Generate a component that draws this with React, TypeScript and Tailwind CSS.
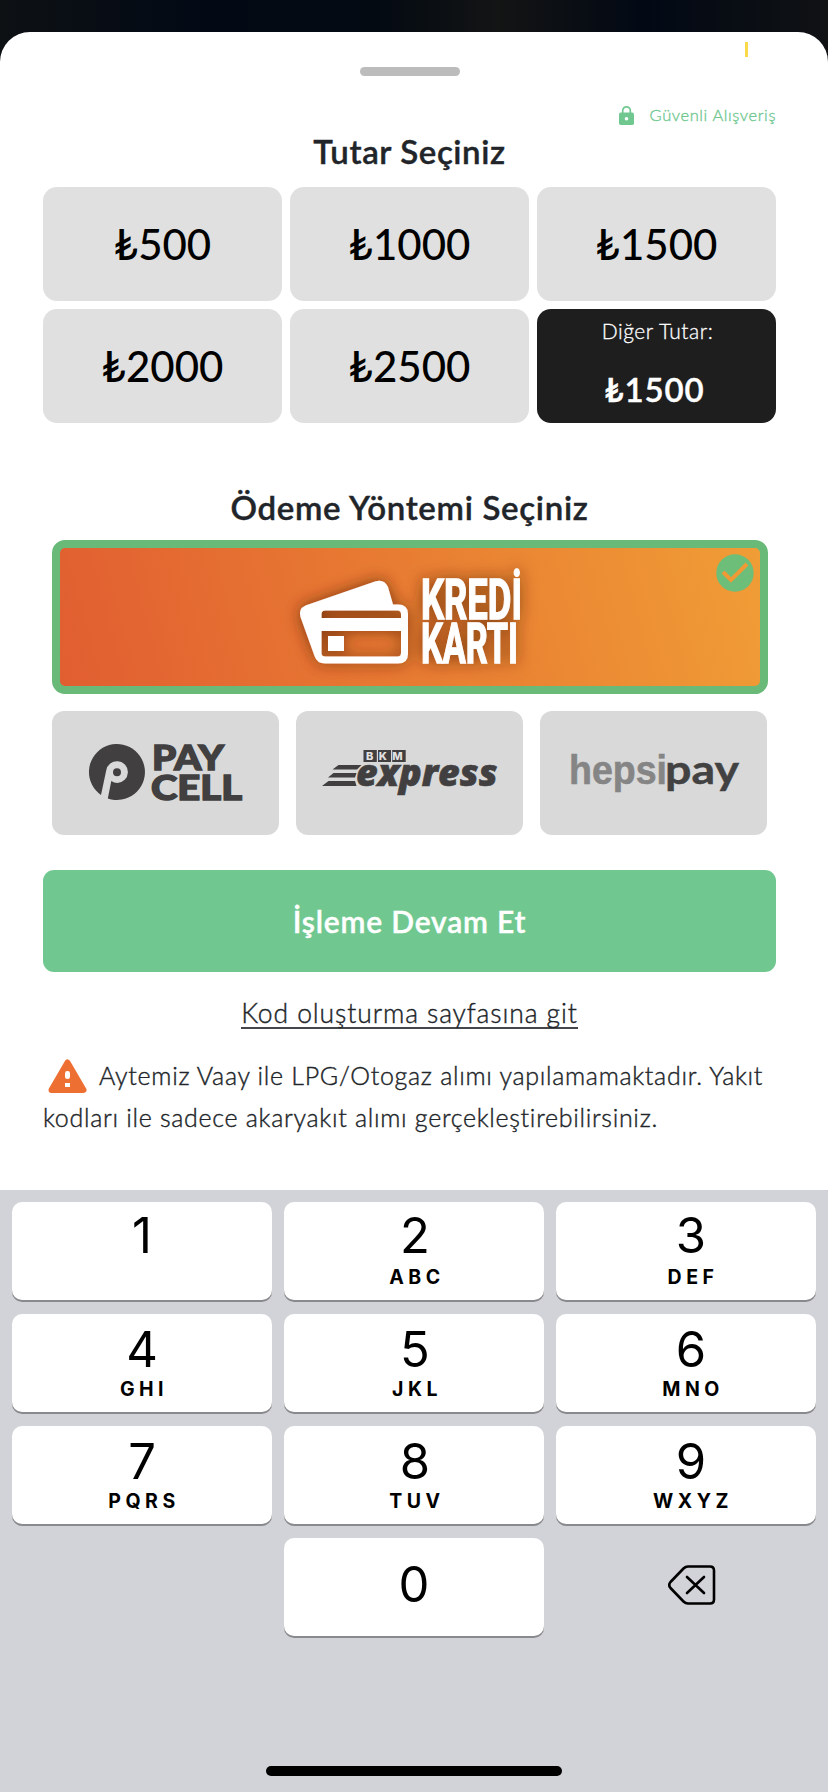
import React from "react";

const amounts = ["₺500", "₺1000", "₺1500", "₺2000", "₺2500"];

const keys = [
  ["1", ""],
  ["2", "ABC"],
  ["3", "DEF"],
  ["4", "GHI"],
  ["5", "JKL"],
  ["6", "MNO"],
  ["7", "PQRS"],
  ["8", "TUV"],
  ["9", "WXYZ"],
];

function LockIcon() {
  return (
    <svg width="15" height="19" viewBox="0 0 15 19" className="shrink-0">
      <path d="M3.700 8V4.500a3.800 3.600 0 0 1 7.600 0V8" fill="none" stroke="#70c890" strokeWidth="1.700" />
      <rect x="0" y="6.600" width="15" height="12.400" rx="1.800" fill="#70c890" />
      <circle cx="7.500" cy="12.800" r="1.800" fill="#fff" />
    </svg>
  );
}

function CreditCardArt() {
  return (
    <svg width="300" height="136" viewBox="260 549 300 136" className="shrink-0 overflow-visible">
      <defs>
        <filter id="glow" x="-30%" y="-40%" width="160%" height="180%">
          <feDropShadow dx="0" dy="0" stdDeviation="8" floodColor="#5a2200" floodOpacity="0.75" />
        </filter>
      </defs>
      <g filter="url(#glow)" fill="#fff">
        <path
          fillRule="evenodd"
          d="M305.500 605.500 L375 581.500 Q384 578.500 388 587 L393 604.500 H398 Q408 604.500 408 614 V654 Q408 663.500 398 663.500 H325 Q317 663.500 314.500 656 L300.500 617 Q298 609 305.500 605.500 Z M325.500 610.500 Q321.500 610.500 321.500 614 V618 H401 V614 Q401 610.500 397.500 610.500 Z M321.500 631 V653 Q321.500 656.500 325.500 656.500 H397.500 Q401 656.500 401 653 V631 Z"
        />
        <rect x="328" y="636" width="16" height="15" />
        <g fontFamily="Roboto, sans-serif" fontWeight="700" fontSize="55" stroke="#fff" strokeWidth="1.300">
          <text x="421" y="618.500" textLength="101" lengthAdjust="spacingAndGlyphs">KREDİ</text>
          <text x="421" y="663" textLength="97" lengthAdjust="spacingAndGlyphs">KARTI</text>
        </g>
      </g>
    </svg>
  );
}

function PaycellLogo() {
  return (
    <svg width="154" height="60" viewBox="88 742 154 60" className="overflow-visible">
      <path
        fillRule="evenodd"
        fill="#413f40"
        d="M101 795 A28 28 0 1 1 107.800 798.450 L111.300 781 Q114 783 117.300 783 A10.900 10.900 0 1 0 106.200 770.500 Z"
      />
      <circle cx="117" cy="772.300" r="4" fill="#413f40" />
      <g fill="#413f40" stroke="#413f40" strokeWidth="1.400" fontFamily="Lato, sans-serif" fontWeight="900" fontSize="34">
        <text x="152" y="769.500" textLength="72" lengthAdjust="spacingAndGlyphs">PAY</text>
        <text x="151" y="799.500" textLength="91" lengthAdjust="spacingAndGlyphs">CELL</text>
      </g>
    </svg>
  );
}

function BkmLogo() {
  return (
    <svg width="178" height="48" viewBox="319.500 748 178 48" className="overflow-visible">
      <g fill="#413f40">
        <rect x="363" y="750" width="13.300" height="12" />
        <rect x="377.500" y="750" width="13" height="12" />
        <rect x="391.700" y="750" width="13.500" height="12" />
        <path d="M338 765 H361 L356.500 769.500 H332 Z M333 773 H356 L354.500 777.500 H327.500 Z M328 781 H354.500 L356 786 H321.500 Z" />
      </g>
      <text x="365.500" y="760" fill="#e2e2e2" fontFamily="Inter, sans-serif" fontWeight="800" fontSize="11" letterSpacing="5.400">BKM</text>
      <text x="355.500" y="785.500" fill="#413f40" stroke="#413f40" strokeWidth="0.600" fontFamily="'Open Sans', sans-serif" fontWeight="800" fontStyle="italic" fontSize="37" textLength="141.500" lengthAdjust="spacingAndGlyphs">express</text>
    </svg>
  );
}

function HepsipayLogo() {
  return (
    <svg width="169" height="40" viewBox="569 751 169 40" className="overflow-visible">
      <text x="569" y="783" fill="#858585" stroke="#858585" strokeWidth="0.600" fontFamily="'Liberation Sans', sans-serif" fontWeight="700" fontSize="40" textLength="98" lengthAdjust="spacingAndGlyphs">hepsi</text>
      <text x="665" y="783" fill="#424242" stroke="#424242" strokeWidth="0.400" fontFamily="Lato, sans-serif" fontWeight="700" fontSize="41" textLength="74" lengthAdjust="spacingAndGlyphs">pay</text>
    </svg>
  );
}

function Provider({ children }: { children: React.ReactNode }) {
  return (
    <button className="flex h-[124px] items-center justify-center rounded-xl bg-[#d9d9d9] pb-[2px]">
      {children}
    </button>
  );
}

export default function App() {
  return (
    <div className="h-[1792px] w-[828px] overflow-hidden bg-[linear-gradient(90deg,#0d1114,#020914_25%,#030a12_45%,#131414_60%,#020914_78%,#101214)] pt-8 font-[Lato,sans-serif] text-[#212529]">
      <div className="relative flex h-[1158px] flex-col rounded-t-[30px] bg-white pr-[52px] pl-[43px]">
        <div className="absolute top-[10px] left-[745px] h-[15px] w-[3px] bg-[#fada4b]" />
        <div className="mt-[35px] h-[9px] w-[100px] shrink-0 self-center rounded-full bg-[#bcbcbc]" />
        <div className="mt-[27px] flex h-[24px] shrink-0 items-center justify-end gap-4 text-[#70c890]">
          <LockIcon />
          <span className="text-[16.500px] font-light tracking-[0.600px] [-webkit-text-stroke:0.35px]">Güvenli Alışveriş</span>
        </div>
        <h2 className="mt-[4px] h-[40px] shrink-0 text-center text-[33px] leading-[40px] font-semibold tracking-[0.600px] [-webkit-text-stroke:0.4px]">Tutar Seçiniz</h2>
        <div className="mt-[16px] grid shrink-0 grid-cols-3 gap-2">
          {amounts.map((a) => (
            <button key={a} className="h-[114px] rounded-[14px] bg-[#e0e0e0] pt-px text-[42px] font-medium text-black">
              {a}
            </button>
          ))}
          <button className="flex h-[114px] flex-col items-center rounded-[14px] bg-[#1e1e1e] text-white">
            <span className="mt-[8px] pl-[2px] text-[21px] leading-[28px] font-light tracking-[0.550px] [-webkit-text-stroke:0.3px]">Diğer Tutar:</span>
            <span className="mt-[24px] mr-[4px] text-[33px] leading-[40px] font-semibold tracking-[0.900px] [-webkit-text-stroke:0.4px]">₺1500</span>
          </button>
        </div>
        <h2 className="mt-[64px] h-[40px] shrink-0 text-center text-[33px] leading-[40px] font-semibold tracking-[0.700px] [-webkit-text-stroke:0.4px]">Ödeme Yöntemi Seçiniz</h2>
        <div className="mt-[13px] flex shrink-0 flex-col gap-[17px] px-[8.500px]">
          <button className="relative flex h-[154px] items-center justify-center overflow-hidden rounded-[13px] border-[8.500px] border-[#69ba79] bg-[linear-gradient(75deg,#e15e31,#e87c32_50%,#f09d36)]">
            <CreditCardArt />
            <svg className="absolute top-[6px] right-[6px]" width="38" height="38" viewBox="0 0 38 38">
              <circle cx="19" cy="19" r="18.700" fill="#6cbe79" />
              <path d="M7 18 L15 26 L31 10" fill="none" stroke="#f09a35" strokeWidth="4" />
            </svg>
          </button>
          <div className="grid grid-cols-3 gap-[17px]">
            <Provider><PaycellLogo /></Provider>
            <Provider><BkmLogo /></Provider>
            <Provider><HepsipayLogo /></Provider>
          </div>
        </div>
        <button className="mt-[35px] h-[102px] shrink-0 rounded-[11px] bg-[#70c890] pt-px text-[30px] font-semibold tracking-[0.800px] text-white [-webkit-text-stroke:0.4px]">
          İşleme Devam Et
        </button>
        <a className="mt-[23px] h-[34px] shrink-0 self-center border-b-2 border-[#43464a] text-[26.500px] leading-[36px] font-light tracking-[0.900px] [-webkit-text-stroke:0.4px]">
          Kod oluşturma sayfasına git
        </a>
        <p className="mt-[25px] text-[25px] leading-[42px] font-light tracking-[0.700px] whitespace-nowrap [-webkit-text-stroke:0.4px]">
          <svg width="39" height="34" viewBox="0 0 39 34" className="mr-[12px] ml-[5px] inline-block align-[-8px]">
            <path d="M19.500 3.500 L35.500 31 H3.500 Z" fill="#ed7032" stroke="#ed7032" strokeWidth="6" strokeLinejoin="round" />
            <rect x="17" y="12" width="5" height="8" rx="2.300" fill="#fff" />
            <rect x="17" y="24" width="5" height="4" fill="#fff" />
          </svg>
          Aytemiz Vaay ile LPG/Otogaz alımı yapılamamaktadır. Yakıt
          <br />
          kodları ile sadece akaryakıt alımı gerçekleştirebilirsiniz.
        </p>
      </div>
      <div className="flex h-[602px] flex-col bg-[#d2d3d9] px-3 pt-3 font-[Inter,sans-serif] text-black">
        <div className="grid grid-cols-3 gap-x-3 gap-y-[14px]">
          {keys.map(([n, l], i) => (
            <button key={n} className={`flex h-[98px] flex-col items-center rounded-[10px] bg-white shadow-[0_2px_0_#898a8d] ${i < 3 ? "pt-[7px]" : "pt-[9px]"} ${i % 3 === 2 ? "pl-[10px]" : i % 3 === 1 ? "pl-[2px]" : ""}`}>
              <span className="text-[49px] leading-[54px]">{n}</span>
              <span className={`pl-1 text-[19.500px] leading-[24px] font-bold tracking-[4.500px] ${i < 3 ? "mt-[2px]" : ""}`}>{l}</span>
            </button>
          ))}
          <div />
          <button className="h-[98px] rounded-[10px] bg-white pb-1 text-[49px] leading-[54px] shadow-[0_2px_0_#898a8d]">0</button>
          <div className="flex items-center justify-center pb-[4px] pl-[12px]">
            <svg width="48" height="40" viewBox="0 0 48 40" fill="none" stroke="#000" strokeWidth="2.600" strokeLinecap="round" strokeLinejoin="round">
              <path d="M20 1.500 H42 Q46 1.500 46 5.500 V34.500 Q46 38.500 42 38.500 H20 Q17.500 38.500 15.500 36.500 L2.500 23 Q0 20 2.500 17 L15.500 3.500 Q17.500 1.500 20 1.500 Z" />
              <path d="M19 12 L36 28 M36 12 L19 28" />
            </svg>
          </div>
        </div>
        <div className="mt-auto mb-[16px] h-[10px] w-[296px] self-center rounded-full bg-black" />
      </div>
    </div>
  );
}
